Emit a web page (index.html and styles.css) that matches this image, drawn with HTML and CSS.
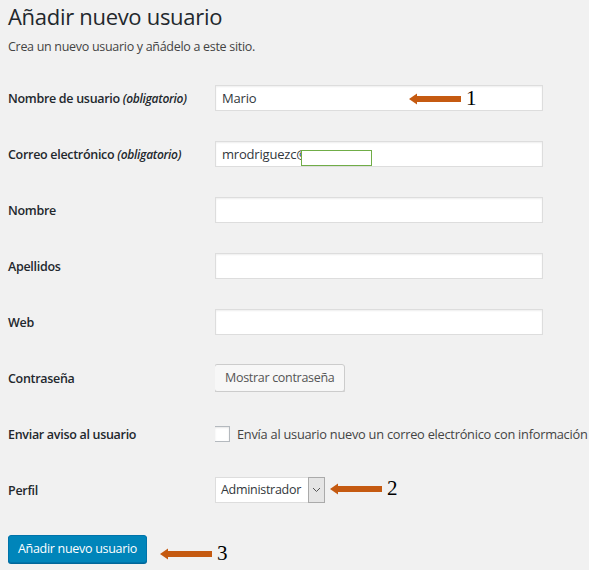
FILE: index.html
```html
<!DOCTYPE html>
<html lang="es">
<head>
<meta charset="utf-8">
<title>Añadir nuevo usuario</title>
<link rel="stylesheet" href="styles.css">
</head>
<body>
<div class="wrap">
  <h1 class="title">Añadir nuevo usuario</h1>
  <p class="desc">Crea un nuevo usuario y añádelo a este sitio.</p>
  <div class="form">
    <div class="row">
      <div class="label">Nombre de usuario <em>(obligatorio)</em></div>
      <div class="field"><div class="input">Mario</div></div>
    </div>
    <div class="row">
      <div class="label">Correo electrónico <em>(obligatorio)</em></div>
      <div class="field"><div class="input">mrodriguezc@<span class="hide"></span></div></div>
    </div>
    <div class="row">
      <div class="label">Nombre</div>
      <div class="field"><div class="input"></div></div>
    </div>
    <div class="row">
      <div class="label">Apellidos</div>
      <div class="field"><div class="input"></div></div>
    </div>
    <div class="row">
      <div class="label">Web</div>
      <div class="field"><div class="input"></div></div>
    </div>
    <div class="row">
      <div class="label">Contraseña</div>
      <div class="field"><div class="btn">Mostrar contraseña</div></div>
    </div>
    <div class="row">
      <div class="label">Enviar aviso al usuario</div>
      <div class="field check"><span class="box"></span><span class="ctext">Envía al usuario nuevo un correo electrónico con información</span></div>
    </div>
    <div class="row">
      <div class="label">Perfil</div>
      <div class="field"><div class="select"><span class="sval">Administrador</span><span class="sarrow"><svg width="9" height="6" viewBox="0 0 9 6"><path d="M1 1l3.5 3.5L8 1" fill="none" stroke="#555" stroke-width="1"/></svg></span></div></div>
    </div>
  </div>
  <div class="primary">Añadir nuevo usuario</div>
</div>

<div class="note n1"><svg width="52" height="12" viewBox="0 0 52 12"><path d="M0 6L8 0.5V3H52V9H8V11.5Z" fill="#c55a11"/></svg><span>1</span></div>
<div class="note n2"><svg width="52" height="12" viewBox="0 0 52 12"><path d="M0 6L8 0.5V3H52V9H8V11.5Z" fill="#c55a11"/></svg><span>2</span></div>
<div class="note n3"><svg width="52" height="12" viewBox="0 0 52 12"><path d="M0 6L8 0.5V3H52V9H8V11.5Z" fill="#c55a11"/></svg><span>3</span></div>
</body>
</html>
```
FILE: styles.css
```css
html, body {
  margin: 0;
  padding: 0;
  background: #f1f1f1;
  overflow: hidden;
}
body {
  font-family: "Open Sans", "Noto Sans", sans-serif;
  color: #23282d;
  width: 589px;
  height: 570px;
  position: relative;
}
.wrap {
  padding: 0 0 0 8px;
  white-space: nowrap;
}
.title {
  margin: 0;
  padding-top: 2px;
  font-size: 22px;
  font-weight: 400;
  line-height: 28px;
  letter-spacing: -0.3px;
}
.desc {
  margin: 9px 0 0;
  font-size: 12.5px;
  line-height: 16px;
  color: #444;
  letter-spacing: -0.3px;
}
.form {
  margin-top: 15px;
}
.row {
  display: flex;
  align-items: center;
  height: 56px;
}
.label {
  width: 207px;
  font-size: 12.5px;
  font-weight: 600;
  color: #23282d;
  letter-spacing: -0.3px;
}
.label em {
  font-style: italic;
  font-size: 12px;
}
.field {
  flex: 1;
  display: flex;
  align-items: center;
  overflow: hidden;
}
.input {
  width: 320px;
  height: 24px;
  border: 1px solid #ddd;
  background: #fff;
  box-shadow: inset 0 1px 2px rgba(0,0,0,0.07);
  font-size: 13px;
  line-height: 24px;
  padding-left: 6px;
  color: #32373c;
  letter-spacing: -0.2px;
  position: relative;
}
.hide {
  position: absolute;
  left: 85px;
  top: 8px;
  width: 69px;
  height: 14px;
  border: 1px solid #70ad47;
  background: #fff;
}
.btn {
  margin-left: -1px;
  height: 26px;
  padding: 0 10px;
  border: 1px solid #ccc;
  border-radius: 3px;
  background: #f7f7f7;
  box-shadow: 0 1px 0 #ccc;
  font-size: 12.5px;
  line-height: 26px;
  color: #555;
  letter-spacing: -0.3px;
}
.check {
  gap: 7px;
}
.box {
  flex: none;
  width: 14px;
  height: 14px;
  border: 1px solid #b4b9be;
  background: #fff;
  box-shadow: inset 0 1px 2px rgba(0,0,0,0.1);
  margin-left: -1px;
}
.ctext {
  font-size: 12.8px;
  color: #444;
  letter-spacing: -0.25px;
}
.select {
  display: flex;
  height: 26px;
  width: 110px;
  border: 1px solid #ddd;
  background: #fff;
  box-sizing: border-box;
}
.sval {
  flex: 1;
  font-size: 12.5px;
  line-height: 24px;
  padding-left: 5px;
  color: #32373c;
  letter-spacing: -0.3px;
}
.sarrow {
  width: 15px;
  background: #e5e5e5;
  border: 1px solid #aaa;
  margin: -1px -1px -1px 0;
  display: flex;
  align-items: center;
  justify-content: center;
}
.primary {
  display: inline-block;
  margin-top: 17px;
  height: 26px;
  padding: 0 9px;
  background: #0085ba;
  border: 1px solid #0073aa;
  border-radius: 3px;
  box-shadow: 0 1px 0 #006799;
  color: #fff;
  font-size: 12.5px;
  line-height: 26px;
  letter-spacing: -0.3px;
}
.note {
  position: absolute;
  display: flex;
  align-items: center;
  gap: 5px;
  font-family: "Liberation Serif", serif;
  font-size: 21px;
  color: #000;
}
.n1 { left: 409px; top: 86px; }
.n2 { left: 330px; top: 476px; }
.n3 { left: 160px; top: 541px; }
```
